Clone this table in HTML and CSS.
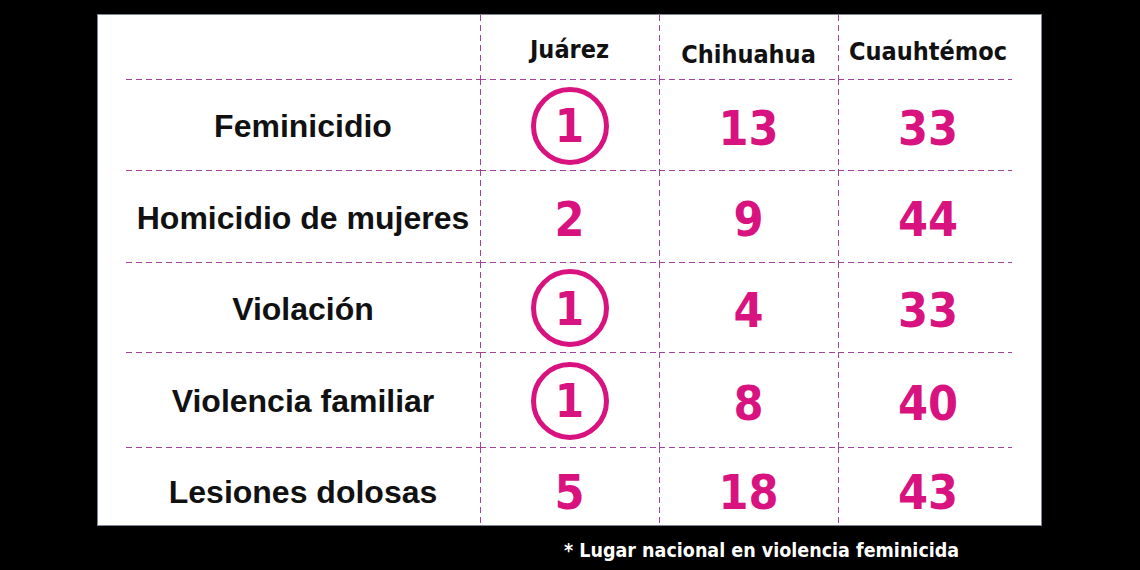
FILE: index.html
```html
<!DOCTYPE html>
<html lang="es">
<head>
<meta charset="utf-8">
<title>Lugar nacional en violencia feminicida</title>
<link rel="stylesheet" href="styles.css">
</head>
<body>
<main class="page">
  <section class="panel">
    <div class="table">
      <div class="cell head"></div>
      <div class="cell head col"><span class="h-juarez">Juárez</span></div>
      <div class="cell head col"><span class="h-chih">Chihuahua</span></div>
      <div class="cell head col last"><span class="h-cuau">Cuauhtémoc</span></div>

      <div class="cell row label">Feminicidio</div>
      <div class="cell row col num"><span class="ring">1</span></div>
      <div class="cell row col num">13</div>
      <div class="cell row col num last">33</div>

      <div class="cell row label">Homicidio de mujeres</div>
      <div class="cell row col num">2</div>
      <div class="cell row col num">9</div>
      <div class="cell row col num last">44</div>

      <div class="cell row label">Violación</div>
      <div class="cell row col num"><span class="ring">1</span></div>
      <div class="cell row col num">4</div>
      <div class="cell row col num last">33</div>

      <div class="cell row label">Violencia familiar</div>
      <div class="cell row col num"><span class="ring">1</span></div>
      <div class="cell row col num">8</div>
      <div class="cell row col num last">40</div>

      <div class="cell row label final">Lesiones dolosas</div>
      <div class="cell row col num final">5</div>
      <div class="cell row col num final">18</div>
      <div class="cell row col num last final">43</div>
    </div>
  </section>
  <p class="note">* Lugar nacional en violencia feminicida</p>
</main>
</body>
</html>
```

FILE: styles.css
```css
:root {
  --dash: #a2439a;
  --pink: #d8137f;
  --hline: repeating-linear-gradient(90deg, var(--dash) 0 6px, transparent 6px 10px);
  --vline: repeating-linear-gradient(180deg, var(--dash) 0 6px, transparent 6px 10px);
}

html, body {
  margin: 0;
  padding: 0;
  background: #000;
}

.page {
  width: 1140px;
  height: 570px;
  display: flex;
  flex-direction: column;
  box-sizing: border-box;
  padding: 14px 0 0 97px;
}

.panel {
  width: 945px;
  height: 512px;
  background: #fff;
  border: 1px solid #7d8594;
  box-sizing: border-box;
  padding-left: 28px;
}

.table {
  display: grid;
  grid-template-columns: 354px 179px 179px 174px;
  grid-template-rows: 64px 91px 92px 90px 95px 78px;
}

.cell {
  display: flex;
  align-items: center;
  justify-content: center;
  box-sizing: border-box;
}

.last {
  padding-left: 6px;
}

.row {
  background: var(--hline) left top / 100% 1px no-repeat;
}

.col {
  background: var(--vline) left top / 1px 100% no-repeat;
}

.row.col {
  background:
    var(--hline) left top / 100% 1px no-repeat,
    var(--vline) left top / 1px 100% no-repeat;
}

.head {
  font-family: "DejaVu Sans Condensed", "DejaVu Sans", sans-serif;
  font-stretch: condensed;
  font-weight: bold;
  font-size: 25px;
  color: #111;
  padding-top: 8px;
}

.h-juarez { position: relative; top: -2px; }
.h-chih { position: relative; top: 3px; }

.label {
  font-family: "Liberation Sans", Arial, sans-serif;
  font-weight: bold;
  font-size: 32px;
  color: #111;
  padding-top: 4px;
}

.num {
  font-family: "DejaVu Sans Condensed", "DejaVu Sans", sans-serif;
  font-stretch: condensed;
  font-weight: bold;
  font-size: 48px;
  color: var(--pink);
  padding-top: 6px;
}

.final {
  padding-top: 12px;
}

.ring {
  width: 78px;
  height: 78px;
  box-sizing: border-box;
  border: 5px solid var(--pink);
  border-radius: 50%;
  display: flex;
  align-items: center;
  justify-content: center;
  font-size: 47px;
  margin-top: -4px;
}

.note {
  margin: 13px 0 0 0;
  padding-left: 467px;
  font-family: "DejaVu Sans Condensed", "DejaVu Sans", sans-serif;
  font-stretch: condensed;
  font-weight: bold;
  font-size: 19.5px;
  color: #fff;
}
```
